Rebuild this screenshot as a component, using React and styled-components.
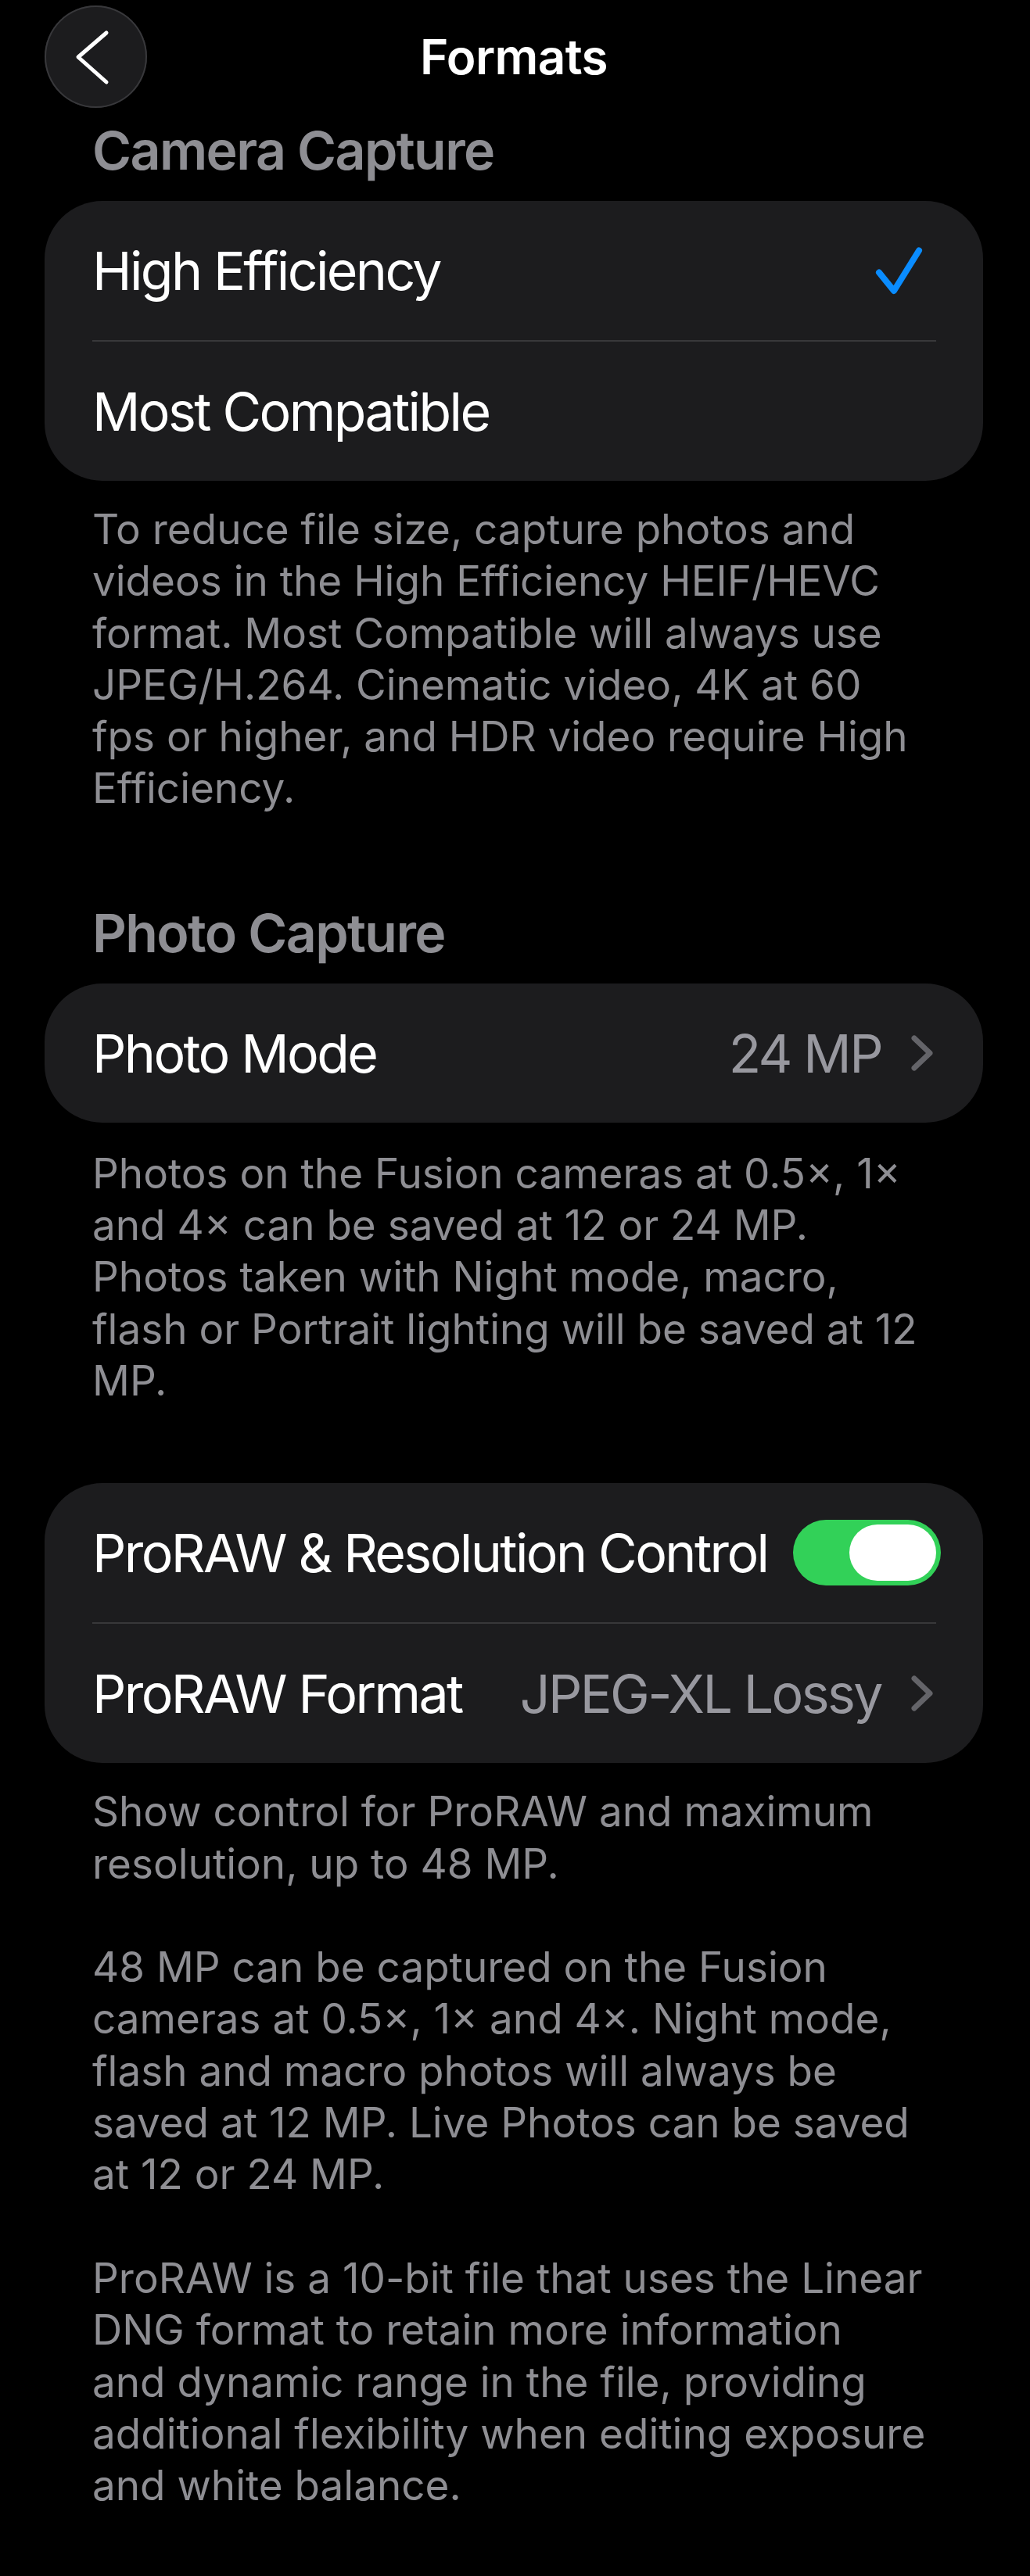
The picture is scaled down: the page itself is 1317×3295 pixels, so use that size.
import React from 'react';
import styled, { createGlobalStyle } from 'styled-components';

const GlobalStyle = createGlobalStyle`
  body {
    margin: 0;
    background: #000;
    font-family: Inter, "Liberation Sans", sans-serif;
    -webkit-font-smoothing: antialiased;
  }
`;

const Page = styled.div`
  width: 1317px;
  box-sizing: border-box;
  padding: 7px 60px 80px 57px;
  background: #000;
`;

const NavBar = styled.div`
  display: grid;
  grid-template-columns: 131px 1fr 131px;
  align-items: center;
  height: 131px;
`;

const BackButton = styled.button`
  width: 131px;
  height: 131px;
  padding: 0;
  border: none;
  border-radius: 50%;
  background: #1c1c1e;
  box-shadow: inset 0 0 0 2px #38383b;
  display: flex;
  cursor: pointer;
`;

const Title = styled.h1`
  margin: 0;
  text-align: center;
  font-size: 62px;
  font-weight: 600;
  letter-spacing: -0.6px;
  color: #fff;
`;

const SectionHeader = styled.h2`
  margin: ${(p) => p.$top}px 0 25px;
  padding-left: 61px;
  font-size: 68px;
  line-height: 80px;
  font-weight: 600;
  letter-spacing: -1.6px;
  color: #8e8e93;
`;

const Card = styled.div`
  margin-top: ${(p) => p.$top || 0}px;
  background: #1c1c1e;
  border-radius: 74px;
  overflow: hidden;
`;

const Row = styled.div`
  height: 178px;
  display: flex;
  align-items: center;
  padding: 0 60px 0 61px;
`;

const Label = styled.span`
  flex: 1;
  white-space: nowrap;
  font-size: 68px;
  letter-spacing: -2.6px;
  color: #fff;
`;

const Value = styled.span`
  font-size: 68px;
  letter-spacing: -2.6px;
  color: #98989f;
  white-space: nowrap;
`;

const Separator = styled.div`
  height: 2px;
  margin: 0 60px 0 61px;
  background: #38383a;
`;

const Footnote = styled.div`
  margin-top: ${(p) => p.$top}px;
  padding-left: 61px;
  font-size: 53px;
  line-height: 66.3px;
  letter-spacing: 0;
  color: #8e8e93;
`;

const Line = styled.div`
  white-space: pre;
  min-height: 66.3px;
`;

const CheckIcon = styled.svg`
  width: 64px;
  height: 64px;
  margin-right: 16px;
`;

const Chevron = styled.svg`
  width: 32px;
  height: 50px;
  margin-left: 36px;
  margin-right: 2px;
`;

const Toggle = styled.div`
  width: 189px;
  height: 84px;
  margin-right: -6px;
  margin-left: 30px;
  box-sizing: border-box;
  padding: 6px;
  border-radius: 42px;
  background: ${(p) => (p.$on ? '#32d158' : '#39393d')};
  display: flex;
  justify-content: ${(p) => (p.$on ? 'flex-end' : 'flex-start')};
`;

const Knob = styled.div`
  width: 111px;
  height: 72px;
  border-radius: 36px;
  background: #fff;
`;

const footers = {
  capture: [
    'To reduce file size, capture photos and',
    'videos in the High Efficiency HEIF/HEVC',
    'format. Most Compatible will always use',
    'JPEG/H.264. Cinematic video, 4K at 60',
    'fps or higher, and HDR video require High',
    'Efficiency.',
  ],
  photo: [
    'Photos on the Fusion cameras at 0.5×, 1×',
    'and 4× can be saved at 12 or 24 MP.',
    'Photos taken with Night mode, macro,',
    'flash or Portrait lighting will be saved at 12',
    'MP.',
  ],
  proraw: [
    'Show control for ProRAW and maximum',
    'resolution, up to 48 MP.',
    '',
    '48 MP can be captured on the Fusion',
    'cameras at 0.5×, 1× and 4×. Night mode,',
    'flash and macro photos will always be',
    'saved at 12 MP. Live Photos can be saved',
    'at 12 or 24 MP.',
    '',
    'ProRAW is a 10-bit file that uses the Linear',
    'DNG format to retain more information',
    'and dynamic range in the file, providing',
    'additional flexibility when editing exposure',
    'and white balance.',
  ],
};

function DisclosureChevron() {
  return (
    <Chevron viewBox="0 0 32 50">
      <polyline points="6,6 26,25 6,44" fill="none" stroke="#646469" strokeWidth="7" strokeLinecap="round" strokeLinejoin="round" />
    </Chevron>
  );
}

function Note({ lines, top }) {
  return (
    <Footnote $top={top}>
      {lines.map((line, i) => (
        <Line key={i}>{line}</Line>
      ))}
    </Footnote>
  );
}

export default function App() {
  return (
    <Page>
      <GlobalStyle />
      <NavBar>
        <BackButton aria-label="Back">
          <svg width="131" height="131" viewBox="0 0 131 131">
            <polyline points="79,35 43,66 79,98" fill="none" stroke="#fff" strokeWidth="5" strokeLinecap="round" strokeLinejoin="round" />
          </svg>
        </BackButton>
        <Title>Formats</Title>
        <span />
      </NavBar>

      <SectionHeader $top={14}>Camera Capture</SectionHeader>
      <Card>
        <Row>
          <Label>High Efficiency</Label>
          <CheckIcon viewBox="0 0 64 64">
            <polyline points="7,34.5 26,58 58,6.5" fill="none" stroke="#0a8cff" strokeWidth="8" strokeLinecap="round" strokeLinejoin="round" />
          </CheckIcon>
        </Row>
        <Separator />
        <Row>
          <Label>Most Compatible</Label>
        </Row>
      </Card>
      <Note lines={footers.capture} top={29} />

      <SectionHeader $top={111}>Photo Capture</SectionHeader>
      <Card>
        <Row>
          <Label>Photo Mode</Label>
          <Value>24 MP</Value>
          <DisclosureChevron />
        </Row>
      </Card>
      <Note lines={footers.photo} top={32} />

      <Card $top={98}>
        <Row>
          <Label>ProRAW &amp; Resolution Control</Label>
          <Toggle $on>
            <Knob />
          </Toggle>
        </Row>
        <Separator />
        <Row>
          <Label>ProRAW Format</Label>
          <Value>JPEG-XL Lossy</Value>
          <DisclosureChevron />
        </Row>
      </Card>
      <Note lines={footers.proraw} top={29} />
    </Page>
  );
}
